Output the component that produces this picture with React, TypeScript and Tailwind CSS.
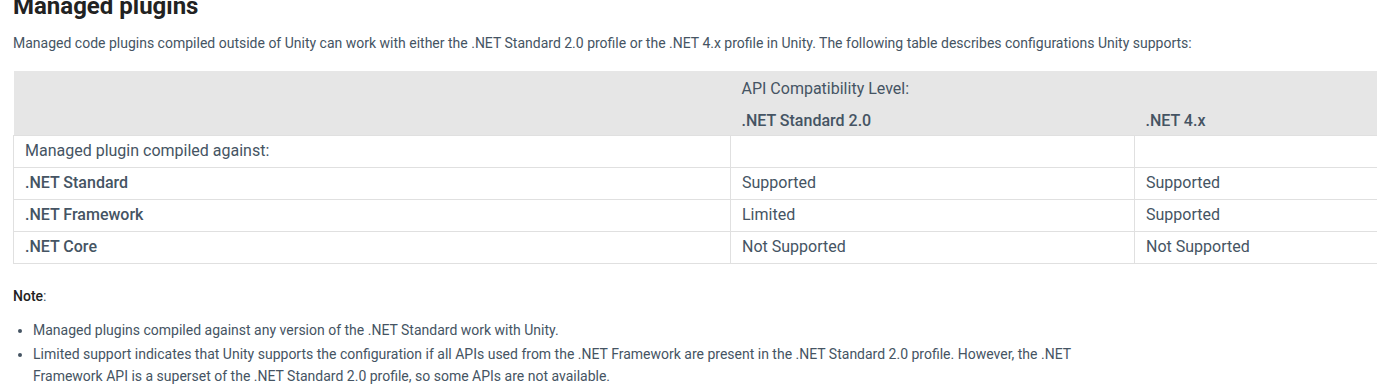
import React from "react";

interface PluginRow {
  name: string;
  standard: string;
  framework: string;
}

const rows: PluginRow[] = [
  { name: ".NET Standard", standard: "Supported", framework: "Supported" },
  { name: ".NET Framework", standard: "Limited", framework: "Supported" },
  { name: ".NET Core", standard: "Not Supported", framework: "Not Supported" },
];

const App: React.FC = () => {
  return (
    <div className="h-[385px] w-[1377px] overflow-hidden bg-white font-['Roboto',sans-serif] text-[#455463]">
      <div className="px-[13px]">
        <h2 className="-mt-[9px] text-[24px] leading-[30px] font-bold text-[#222222]">
          Managed plugins
        </h2>
        <p className="mt-[12px] text-[14px] leading-[20px]">
          Managed code plugins compiled outside of Unity can work with either the .NET Standard 2.0 profile or the .NET 4.x profile in Unity. The following table describes configurations Unity supports:
        </p>

        <table className="mt-[18px] w-[1400px] border-collapse text-[16px] leading-[20px]">
          <thead className="bg-[#e6e6e6]">
            <tr className="h-[32px]">
              <th rowSpan={2} className="w-[717px]" />
              <th colSpan={2} className="px-[11px] pt-[3px] text-left font-normal">
                API Compatibility Level:
              </th>
            </tr>
            <tr className="h-[32px]">
              <th className="w-[404px] px-[11px] pt-[4px] text-left font-medium">
                .NET Standard 2.0
              </th>
              <th className="px-[11px] pt-[4px] text-left font-medium">.NET 4.x</th>
            </tr>
          </thead>
          <tbody>
            <tr className="h-[32px]">
              <td className="border border-[#e0e0e0] px-[11px]">Managed plugin compiled against:</td>
              <td className="border border-[#e0e0e0]" />
              <td className="border border-[#e0e0e0]" />
            </tr>
            {rows.map((row) => (
              <tr key={row.name} className="h-[32px]">
                <td className="border border-[#e0e0e0] px-[11px] font-medium">{row.name}</td>
                <td className="border border-[#e0e0e0] px-[11px]">{row.standard}</td>
                <td className="border border-[#e0e0e0] px-[11px]">{row.framework}</td>
              </tr>
            ))}
          </tbody>
        </table>

        <p className="mt-[22px] text-[14px] leading-[20px]">
          <strong className="font-medium text-[#222222]">Note</strong>:
        </p>
        <ul className="mt-[13px] w-[1070px] list-disc pl-[20px] text-[14px] leading-[22px]">
          <li className="mb-[2px]">Managed plugins compiled against any version of the .NET Standard work with Unity.</li>
          <li>
            Limited support indicates that Unity supports the configuration if all APIs used from the .NET Framework are present in the .NET Standard 2.0 profile. However, the .NET Framework API is a superset of the .NET Standard 2.0 profile, so some APIs are not available.
          </li>
        </ul>
      </div>
    </div>
  );
};

export default App;
